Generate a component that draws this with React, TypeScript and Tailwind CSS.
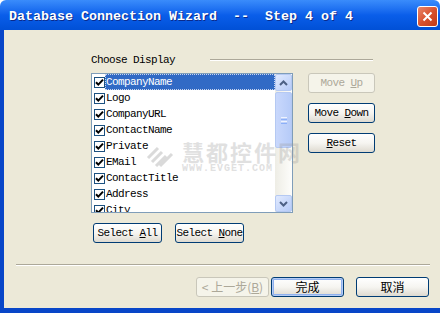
import { ReactNode } from 'react';

const fields = [
  'CompanyName',
  'Logo',
  'CompanyURL',
  'ContactName',
  'Private',
  'EMail',
  'ContactTitle',
  'Address',
  'City',
];

const mono = "font-['Liberation_Mono','DejaVu_Sans_Mono',monospace]";

type BtnProps = {
  children: ReactNode;
  className?: string;
  disabled?: boolean;
  isDefault?: boolean;
};

function XpButton({ children, className = '', disabled, isDefault }: BtnProps) {
  const look = disabled
    ? 'border-[#C9C7BA] text-[#ACA899] bg-[#F5F4EA]'
    : 'border-[#003C74] text-black bg-gradient-to-b from-white via-[#F6F5F1] to-[#DEDAD0]';
  const ring = isDefault ? 'shadow-[inset_0_0_0_1px_#B5CCF5,inset_0_0_0_2px_#8FB1EE]' : '';
  return (
    <button
      type="button"
      className={`flex items-center justify-center rounded-[3px] border ${look} ${ring} ${className}`}
    >
      <span className="whitespace-pre">{children}</span>
    </button>
  );
}

function CheckBox() {
  return (
    <span className="flex h-[11px] w-[11px] shrink-0 items-center justify-center border border-[#1C5180] bg-white">
      <svg width="9" height="9" viewBox="0 0 9 9">
        <path d="M1 4.2 L3.3 6.6 L8 1.6" stroke="#000" strokeWidth="2" fill="none" />
      </svg>
    </span>
  );
}

function ScrollArrow({ up }: { up?: boolean }) {
  return (
    <div className="flex h-[17px] w-[17px] items-center justify-center rounded-[2px] border border-[#B5C9F2] bg-gradient-to-br from-[#E1EAFE] to-[#B6CBF8]">
      <svg width="9" height="6" viewBox="0 0 9 6">
        <path d={up ? 'M1 5 L4.5 1.5 L8 5' : 'M1 1 L4.5 4.5 L8 1'} stroke="#4D6185" strokeWidth="2" fill="none" />
      </svg>
    </div>
  );
}

function ListBox() {
  return (
    <div className="relative flex h-[140px] w-[202px] border border-[#7F9DB9] bg-white">
      <div className="flex-1 overflow-hidden">
        {fields.map((f, i) => (
          <div key={f} className="flex h-[16px] items-center">
            <span className="ml-[2px]">
              <CheckBox />
            </span>
            <span
              className={`ml-0 flex h-[16px] flex-1 items-center pl-[1px] ${
                i === 0 ? 'bg-[#316AC5] text-white outline-1 outline-dotted outline-offset-[-1px] outline-[#C9D5EE]' : 'text-black'
              }`}
            >
              {f}
            </span>
          </div>
        ))}
      </div>
      <div className="flex w-[17px] flex-col bg-gradient-to-r from-[#EEEDE5] to-[#FDFDFB]">
        <ScrollArrow up />
        <div className="mt-[1px] flex h-[56px] w-[17px] items-center justify-center rounded-[2px] border border-[#B5C9F2] bg-gradient-to-r from-[#C9D8FC] to-[#B6CBF8]">
          <div className="flex flex-col gap-[1px]">
            <div className="h-[1px] w-[6px] bg-[#EEF3FE]" />
            <div className="h-[1px] w-[6px] bg-[#8CB0F8]" />
            <div className="h-[1px] w-[6px] bg-[#EEF3FE]" />
            <div className="h-[1px] w-[6px] bg-[#8CB0F8]" />
          </div>
        </div>
        <div className="flex-1" />
        <ScrollArrow />
      </div>
    </div>
  );
}

export default function App() {
  return (
    <div className={`flex h-[313px] w-[440px] flex-col overflow-hidden text-[11px] tracking-[-0.6px] ${mono}`}>
      <div className="flex h-[30px] shrink-0 items-center justify-between rounded-t-[6px] bg-gradient-to-b from-[#3A8CFB] via-[#0A5EEA] to-[#0150D6] pl-[9px] pr-[2px]">
        <span className="pt-[4px] text-[13.33px] font-bold tracking-normal whitespace-pre text-white [text-shadow:1px_1px_0_#0B2A8A]">
          {'Database Connection Wizard  --  Step 4 of 4'}
        </span>
        <div className="mt-[2px] flex h-[21px] w-[21px] items-center justify-center rounded-[3px] border border-white bg-gradient-to-br from-[#E8866A] via-[#D9522E] to-[#C23A16]">
          <svg width="11" height="11" viewBox="0 0 11 11">
            <path d="M1.5 1.5 L9.5 9.5 M9.5 1.5 L1.5 9.5" stroke="#fff" strokeWidth="2" />
          </svg>
        </div>
      </div>

      <div className="relative flex flex-1 flex-col border-b-[5px] border-l-[4px] border-[#0846C8] bg-[#ECE9D8]">
        <div className="flex flex-col pl-[87px] pt-[23px]">
          <div className="flex h-[14px] items-center text-black">
            <span>Choose Display</span>
            <div className="ml-[35px] h-[2px] w-[163px] border-t border-b border-t-[#ACA899] border-b-white" />
          </div>

          <div className="mt-[6px] flex">
            <ListBox />
            <div className="ml-[15px] flex flex-col gap-[10px]">
              <XpButton disabled className="h-[20px] w-[67px]">
                Move <u>U</u>p
              </XpButton>
              <XpButton className="h-[20px] w-[67px]">
                Move <u>D</u>own
              </XpButton>
              <XpButton className="h-[20px] w-[67px]">
                <u>R</u>eset
              </XpButton>
            </div>
          </div>

          <div className="ml-[2px] mt-[10px] flex gap-[13px]">
            <XpButton className="h-[20px] w-[69px]">
              Select <u>A</u>ll
            </XpButton>
            <XpButton className="h-[20px] w-[69px]">
              Select <u>N</u>one
            </XpButton>
          </div>
        </div>

        <div className="ml-[12px] mt-[21px] h-[2px] w-[414px] border-t border-b border-t-[#ACA899] border-b-white" />

        <div className="ml-[192px] mt-[11px] flex font-['Noto_Sans_CJK_SC',sans-serif] text-[12px] tracking-normal">
          <XpButton disabled className="h-[20px] w-[73px]">
            &lt; 上一步(<u>B</u>)
          </XpButton>
          <XpButton isDefault className="ml-[2px] h-[20px] w-[73px]">
            完成
          </XpButton>
          <XpButton className="ml-[12px] h-[20px] w-[73px]">
            取消
          </XpButton>
        </div>

        <div className="pointer-events-none absolute left-[140px] top-[110px] flex items-center gap-[4px] text-[#9A9A9A] opacity-30">
          <svg width="34" height="26" viewBox="0 0 34 26">
            <path d="M4 14 L14 4 M8 18 L18 8 M12 22 L22 12 M16 22 L28 10" stroke="#888" strokeWidth="3" fill="none" />
          </svg>
          <div className="flex flex-col leading-none">
            <span className="font-['Noto_Sans_CJK_SC',sans-serif] text-[22px] font-bold tracking-[2px]">慧都控件网</span>
            <span className="mt-[2px] text-[10px] font-bold tracking-[1px]">WWW.EVGET.COM</span>
          </div>
        </div>
      </div>
    </div>
  );
}
